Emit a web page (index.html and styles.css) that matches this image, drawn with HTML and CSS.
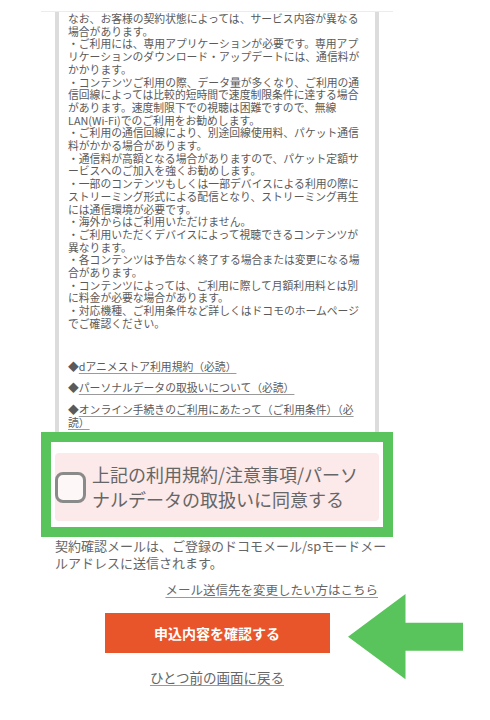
FILE: index.html
```html
<!DOCTYPE html>
<html lang="ja">
<head>
<meta charset="utf-8">
<title>お申込み内容の確認</title>
<link rel="stylesheet" href="styles.css">
</head>
<body>
<main class="page">
  <div class="topline"></div>
  <section class="terms-box">
    <p class="terms">なお、お客様の契約状態によっては、サービス内容が異なる<br>場合があります。<br>・ご利用には、専用アプリケーションが必要です。専用アプ<br>リケーションのダウンロード・アップデートには、通信料が<br>かかります。<br>・コンテンツご利用の際、データ量が多くなり、ご利用の通<br>信回線によっては比較的短時間で速度制限条件に達する場合<br>があります。速度制限下での視聴は困難ですので、無線<br>LAN(Wi-Fi)でのご利用をお勧めします。<br>・ご利用の通信回線により、別途回線使用料、パケット通信<br>料がかかる場合があります。<br>・通信料が高額となる場合がありますので、パケット定額サ<br>ービスへのご加入を強くお勧めします。<br>・一部のコンテンツもしくは一部デバイスによる利用の際に<br>ストリーミング形式による配信となり、ストリーミング再生<br>には通信環境が必要です。<br>・海外からはご利用いただけません。<br>・ご利用いただくデバイスによって視聴できるコンテンツが<br>異なります。<br>・各コンテンツは予告なく終了する場合または変更になる場<br>合があります。<br>・コンテンツによっては、ご利用に際して月額利用料とは別<br>に料金が必要な場合があります。<br>・対応機種、ご利用条件など詳しくはドコモのホームページ<br>でご確認ください。</p>
    <ul class="links">
      <li>◆<a href="#">dアニメストア利用規約（必読）</a></li>
      <li>◆<a href="#">パーソナルデータの取扱いについて（必読）</a></li>
      <li>◆<a href="#">オンライン手続きのご利用にあたって（ご利用条件）（必<br>読）</a></li>
    </ul>
  </section>
  <div class="highlight">
    <label class="agree">
      <span class="checkbox"></span>
      <span class="agree-text">上記の利用規約/注意事項/パーソ<br>ナルデータの取扱いに同意する</span>
    </label>
  </div>
  <p class="note">契約確認メールは、ご登録のドコモメール/spモードメー<br>ルアドレスに送信されます。</p>
  <p class="mail-link"><a href="#">メール送信先を変更したい方はこちら</a></p>
  <button class="confirm" type="button">申込内容を確認する</button>
  <p class="back"><a href="#">ひとつ前の画面に戻る</a></p>
</main>
<svg class="arrow" width="116" height="86" viewBox="0 0 116 86" aria-hidden="true">
  <polygon points="0,42.7 57.5,0 57.5,28.7 115,28.7 115,56.7 57.5,56.7 57.5,85.3" fill="#59c45b"/>
</svg>
</body>
</html>
```

FILE: styles.css
```css
html, body {
  margin: 0;
  padding: 0;
  background: #fff;
}
body {
  position: relative;
  width: 490px;
  height: 720px;
  font-family: "Noto Sans CJK JP", "Noto Sans", sans-serif;
  color: #606060;
}
.page {
  width: 324px;
  margin-left: 55px;
}
.topline {
  margin: 11px -14px 0;
  border-top: 1px solid #ececec;
}
.terms-box {
  height: 420px;
  border-left: 4px solid #dcdcdc;
  border-right: 4px solid #dcdcdc;
  padding: 0 10px 0 9px;
  box-sizing: border-box;
  background: #fff;
  font-size: 10.8px;
  line-height: 12.7px;
  color: #5a5a5a;
}
.terms {
  margin: 0;
  white-space: nowrap;
}
.links {
  list-style: none;
  margin: 30px 0 0;
  padding: 0;
  white-space: nowrap;
}
.links li + li {
  margin-top: 9px;
}
.links a {
  color: #5a5a5a;
  text-decoration: underline;
  text-decoration-color: #9a9a9a;
  text-underline-offset: 2px;
}
.highlight {
  margin: 0 -14px;
  border: 10px solid #59c45b;
  padding: 11px 4px 6px 4px;
}
.agree {
  display: flex;
  align-items: center;
  height: 68px;
  background: #fce9e9;
  border-radius: 4px;
}
.checkbox {
  flex: none;
  width: 31px;
  height: 31px;
  box-sizing: border-box;
  border: 3px solid #8a8a8a;
  border-radius: 8px;
  background: #fdf7f7;
}
.agree-text {
  margin-left: 6px;
  font-size: 18px;
  line-height: 25px;
  color: #666;
  white-space: nowrap;
}
.note {
  margin: 0;
  font-size: 13px;
  line-height: 17px;
  color: #666;
  white-space: nowrap;
}
.mail-link {
  margin: 9.5px 1px 0 0;
  text-align: right;
  font-size: 12.5px;
  line-height: 17px;
}
.mail-link a,
.back a {
  color: #666;
  text-decoration: underline;
  text-decoration-color: #999;
  text-underline-offset: 2px;
}
.confirm {
  display: block;
  width: 225px;
  height: 40px;
  margin: 15.5px auto 0;
  padding: 0;
  border: 0;
  background: #e9552a;
  color: #fff;
  font-family: "Noto Sans CJK JP", sans-serif;
  font-size: 14px;
  font-weight: bold;
}
.back {
  margin: 15.5px 0 0;
  text-align: center;
  font-size: 13.5px;
  line-height: 17px;
}
.arrow {
  position: absolute;
  left: 348px;
  top: 594px;
}
```
